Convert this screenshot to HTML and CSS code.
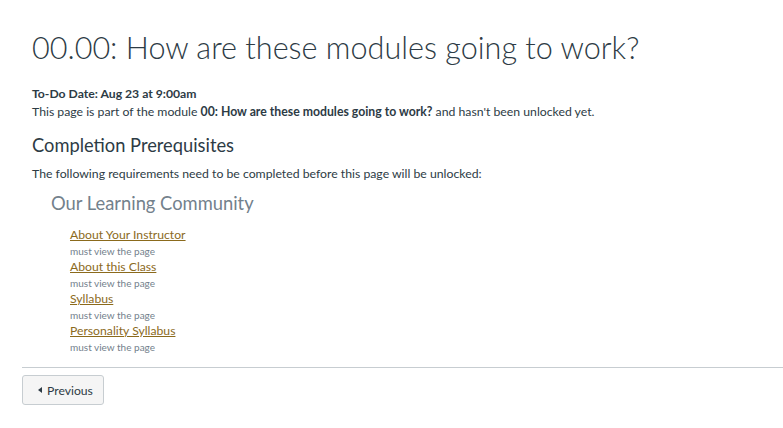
FILE: index.html
```html
<!DOCTYPE html>
<html lang="en">
<head>
<meta charset="utf-8">
<title>00.00: How are these modules going to work?</title>
<link rel="stylesheet" href="styles.css">
</head>
<body>
<div class="page">
  <div class="content">
    <h1 class="title">00.00: How are these modules going to work?</h1>
    <div class="todo">To-Do Date: Aug 23 at 9:00am</div>
    <p class="note">This page is part of the module <b>00: How are these modules going to work?</b> and hasn't been unlocked yet.</p>
    <h2 class="prereq-title">Completion Prerequisites</h2>
    <p class="note">The following requirements need to be completed before this page will be unlocked:</p>
    <div class="module">
      <h3 class="module-name">Our Learning Community</h3>
      <ul class="reqs">
        <li><a href="#">About Your Instructor</a><div class="req">must view the page</div></li>
        <li><a href="#">About this Class</a><div class="req">must view the page</div></li>
        <li><a href="#">Syllabus</a><div class="req">must view the page</div></li>
        <li><a href="#">Personality Syllabus</a><div class="req">must view the page</div></li>
      </ul>
    </div>
  </div>
  <div class="footer">
    <button class="btn"><span class="tri"></span>Previous</button>
  </div>
</div>
</body>
</html>
```
FILE: styles.css
```css
html, body {
  margin: 0;
  padding: 0;
  background: #fff;
}
body {
  font-family: Lato, "Liberation Sans", sans-serif;
  color: #2d3b45;
}
.page {
  padding-left: 22px;
}
.content {
  padding-left: 10px;
  padding-top: 28px;
}
.title {
  margin: 0;
  font-weight: 300;
  font-size: 30.6px;
  line-height: 40px;
  color: #2d3b45;
}
.todo {
  margin-top: 17px;
  font-size: 12.2px;
  font-weight: 700;
  line-height: 18px;
}
.note {
  margin: 0;
  font-size: 12.25px;
  line-height: 18px;
}
.note b { font-weight: 700; }
.prereq-title {
  margin: 12px 0 8px;
  font-weight: 400;
  font-size: 18.3px;
  line-height: 24px;
}
.module {
  padding-left: 19px;
}
.module-name {
  margin: 8px 0 12px;
  font-weight: 400;
  font-size: 18.35px;
  line-height: 24px;
  color: #73818c;
}
.reqs {
  list-style: none;
  margin: 0;
  padding: 0 0 0 19px;
}
.reqs li {
  display: flex;
  flex-direction: column;
  align-items: flex-start;
}
.reqs a {
  display: block;
  font-size: 12.2px;
  color: #8b6a1c;
  text-decoration: underline;
  line-height: 16px;
}
.req {
  font-size: 10px;
  color: #73818c;
  line-height: 16px;
}
.footer {
  margin-top: 12px;
  border-top: 1px solid #c7cdd1;
  padding-top: 7px;
}
.btn {
  display: inline-flex;
  align-items: center;
  gap: 5px;
  height: 30px;
  width: 82px;
  padding: 0 0 0 15px;
  background: #f5f5f5;
  border: 1px solid #c7cdd1;
  border-radius: 3px;
  font-family: Lato, "Liberation Sans", sans-serif;
  font-size: 12.2px;
  color: #2d3b45;
}
.tri {
  width: 0;
  height: 0;
  border-top: 3px solid transparent;
  border-bottom: 3px solid transparent;
  border-right: 4px solid #2d3b45;
}
```
